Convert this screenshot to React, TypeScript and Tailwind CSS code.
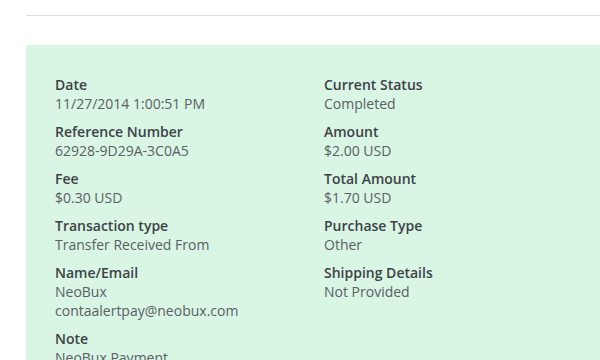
const left = [
  { label: 'Date', values: ['11/27/2014 1:00:51 PM'] },
  { label: 'Reference Number', values: ['62928-9D29A-3C0A5'] },
  { label: 'Fee', values: ['$0.30 USD'] },
  { label: 'Transaction type', values: ['Transfer Received From'] },
  { label: 'Name/Email', values: ['NeoBux', 'contaalertpay@neobux.com'] },
  { label: 'Note', values: ['NeoBux Payment'] },
]

const right = [
  { label: 'Current Status', values: ['Completed'] },
  { label: 'Amount', values: ['$2.00 USD'] },
  { label: 'Total Amount', values: ['$1.70 USD'] },
  { label: 'Purchase Type', values: ['Other'] },
  { label: 'Shipping Details', values: ['Not Provided'] },
]

type Item = { label: string; values: string[] }

function Column({ items }: { items: Item[] }) {
  return (
    <div className="w-[269px] shrink-0">
      {items.map((item) => (
        <div key={item.label} className="mb-[9px]">
          <div className="text-[14px] leading-[19px] font-semibold text-[#3d4248]">{item.label}</div>
          {item.values.map((v) => (
            <div key={v} className="text-[14px] leading-[19px] text-[#5a6068]">
              {v}
            </div>
          ))}
        </div>
      ))}
    </div>
  )
}

export default function App() {
  return (
    <div className="w-[600px] h-[360px] overflow-hidden bg-white font-['Open_Sans',sans-serif]">
      <div className="pt-[15px] pl-[26px]">
        <div className="h-px bg-[#dcdfe0]" />
        <div className="mt-[29px] bg-[#d9f5e3] h-[400px] pl-[29px] pt-[30px] flex">
          <Column items={left} />
          <Column items={right} />
        </div>
      </div>
    </div>
  )
}
